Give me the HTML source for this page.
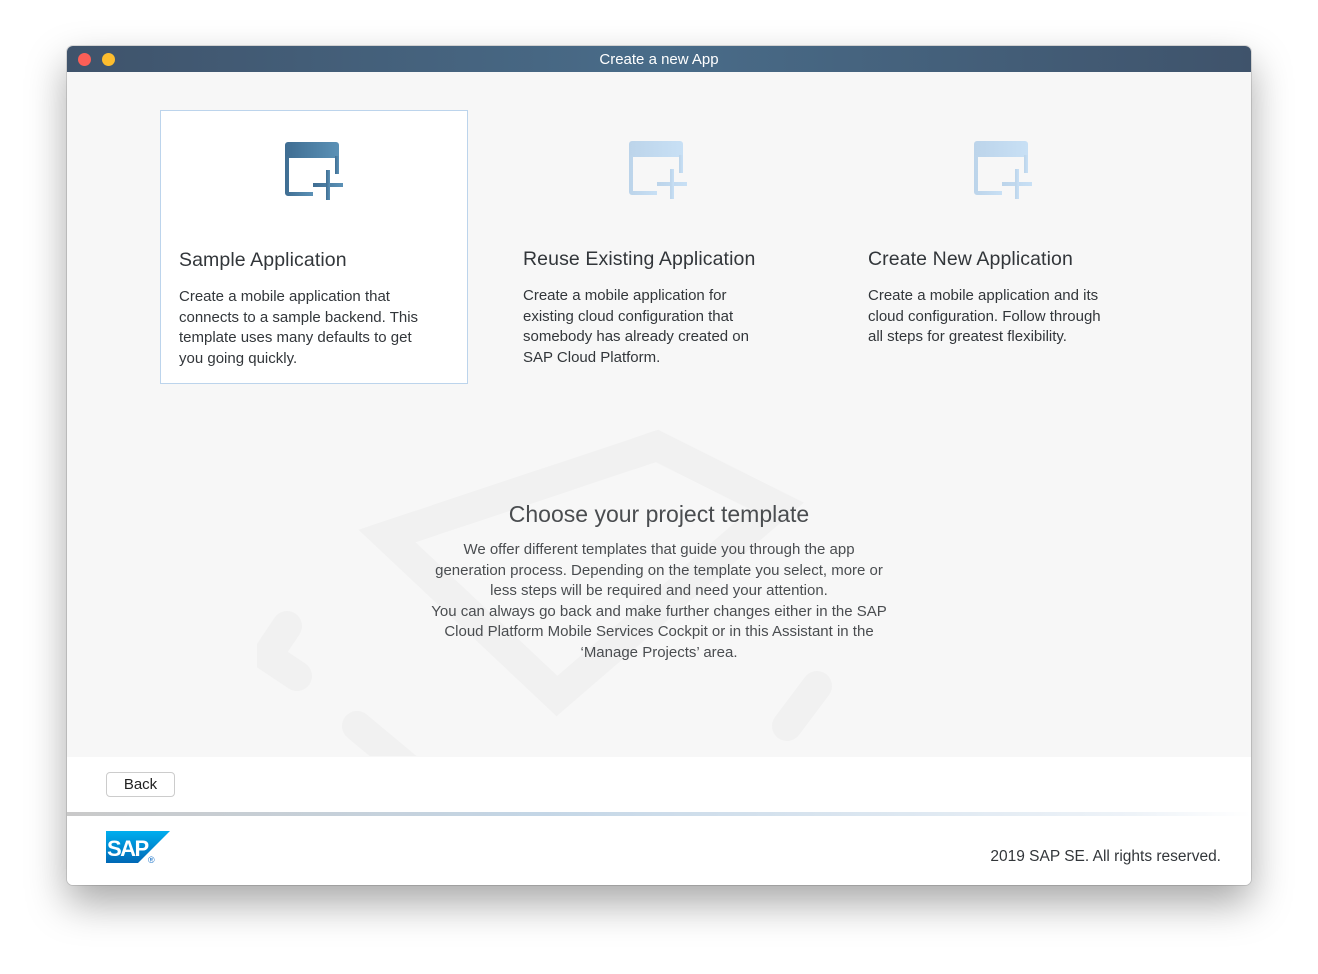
<!DOCTYPE html>
<html><head><meta charset="utf-8"><style>
body{margin:0;width:1318px;height:974px;background:#fff;font-family:"Liberation Sans",sans-serif;position:relative;overflow:hidden}
.win{position:absolute;left:67px;top:46px;width:1184px;height:839px;border-radius:6px;overflow:hidden;box-shadow:0 18px 40px rgba(0,0,0,.35),0 0 0 1px rgba(0,0,0,.12);background:#f7f7f7}
.tb{height:26px;background:linear-gradient(90deg,#3f536b,#496c89 50%,#3f536b);color:#fff;font-size:15px;text-align:center;line-height:28px}
.dot{position:absolute;top:7px;width:13px;height:13px;border-radius:50%}
.card{position:absolute;top:64px;width:308px;height:274px;box-sizing:border-box}
.card h2{position:absolute;left:18px;top:138px;margin:0;font-size:19.5px;font-weight:normal;color:#32363a;letter-spacing:0.1px}
.card p{position:absolute;left:18px;top:176px;margin:0;font-size:15px;line-height:20.5px;color:#32363a;width:255px}
.icon{position:absolute;left:124px;top:31px}
.center{position:absolute;left:0;width:1184px;text-align:center;color:#32363a}
</style></head><body>
<div class="win">
<div class="tb">Create a new App</div>
<div class="dot" style="left:11px;background:#fc5f57"></div>
<div class="dot" style="left:35px;background:#fdbd2e"></div>
<svg style="position:absolute;left:190px;top:380px" width="620" height="330" viewBox="0 0 620 330" fill="none" stroke="#f1f1f1" stroke-width="30" stroke-linecap="round">
<path d="M130 110 L400 20 L520 80 L300 270 Z"/><path d="M30 200 L10 230 L40 250"/><path d="M100 300 L160 350"/><path d="M530 300 L560 260"/>
</svg>
<div style="position:absolute;left:0;top:711px;width:1184px;height:55px;background:#fff"></div>
<div style="position:absolute;left:0;top:766px;width:1184px;height:4px;background:linear-gradient(90deg,#c9c9c9,#c4d6e6 40%,#eef3f8 90%,#fff)"></div>
<div style="position:absolute;left:0;top:770px;width:1184px;height:69px;background:#fff"></div>

<div class="card" style="left:93px;background:#fff;border:1px solid #bcd4ec">
<svg class="icon" width="60" height="58" viewBox="0 0 60 58"><defs><linearGradient id="g" x1="0" x2="1"><stop offset="0" stop-color="#3f6d92"/><stop offset="1" stop-color="#5b91b6"/></linearGradient></defs>
<g fill="url(#g)"><path d="M3 0h48a3 3 0 0 1 3 3v13H0V3a3 3 0 0 1 3-3z"/><path d="M0 14h4v36h24v4H3a3 3 0 0 1-3-3z"/><rect x="50" y="14" width="4" height="18"/><rect x="28" y="41" width="30" height="4"/><rect x="41" y="28" width="4" height="30"/></g></svg>
<h2>Sample Application</h2>
<p>Create a mobile application that connects to a sample backend. This template uses many defaults to get you going quickly.</p></div>

<div class="card" style="left:438px">
<svg class="icon" width="60" height="58" viewBox="0 0 60 58"><defs><linearGradient id="h" x1="0" x2="1"><stop offset="0" stop-color="#bcd4ea"/><stop offset="1" stop-color="#c8e0f5"/></linearGradient></defs>
<g fill="url(#h)"><path d="M3 0h48a3 3 0 0 1 3 3v13H0V3a3 3 0 0 1 3-3z"/><path d="M0 14h4v36h24v4H3a3 3 0 0 1-3-3z"/><rect x="50" y="14" width="4" height="18"/><rect x="28" y="41" width="30" height="4"/><rect x="41" y="28" width="4" height="30"/></g></svg>
<h2>Reuse Existing Application</h2>
<p style="width:240px">Create a mobile application for existing cloud configuration that somebody has already created on SAP Cloud Platform.</p></div>

<div class="card" style="left:783px">
<svg class="icon" width="60" height="58" viewBox="0 0 60 58"><g fill="url(#h)"><path d="M3 0h48a3 3 0 0 1 3 3v13H0V3a3 3 0 0 1 3-3z"/><path d="M0 14h4v36h24v4H3a3 3 0 0 1-3-3z"/><rect x="50" y="14" width="4" height="18"/><rect x="28" y="41" width="30" height="4"/><rect x="41" y="28" width="4" height="30"/></g></svg>
<h2>Create New Application</h2>
<p style="width:240px">Create a mobile application and its cloud configuration. Follow through all steps for greatest flexibility.</p></div>

<div class="center" style="top:455px;font-size:23px;color:#4a4d50">Choose your project template</div>
<div class="center" style="top:494px;font-size:15px;line-height:20.5px;color:#4a4d50"><div style="width:462px;margin:0 auto">We offer different templates that guide you through the app generation process. Depending on the template you select, more or less steps will be required and need your attention.<br>You can always go back and make further changes either in the SAP Cloud Platform Mobile Services Cockpit or in this Assistant in the ‘Manage Projects’ area.</div></div>

<div style="position:absolute;left:39px;top:726px;width:67px;height:23px;border:1px solid #ccc;border-radius:4px;background:#fff;font-size:15px;text-align:center;line-height:23px;color:#222">Back</div>
<svg style="position:absolute;left:39px;top:785px" width="66" height="34" viewBox="0 0 66 34"><defs><linearGradient id="s" x1="0" y1="0" x2="0" y2="1"><stop offset="0" stop-color="#00aeef"/><stop offset="1" stop-color="#0068b5"/></linearGradient></defs><path d="M0 0h64L32 32H0z" fill="url(#s)"/><text x="1" y="25" font-family="Liberation Sans" font-weight="bold" font-size="22" fill="#fff" letter-spacing="-1.5">SAP</text><text x="42" y="32" font-size="9" fill="#1a73c8" font-family="Liberation Sans">®</text></svg>
<div style="position:absolute;right:30px;top:802px;font-size:15.5px;color:#32363a">2019 SAP SE. All rights reserved.</div>
</div>
</body></html>
